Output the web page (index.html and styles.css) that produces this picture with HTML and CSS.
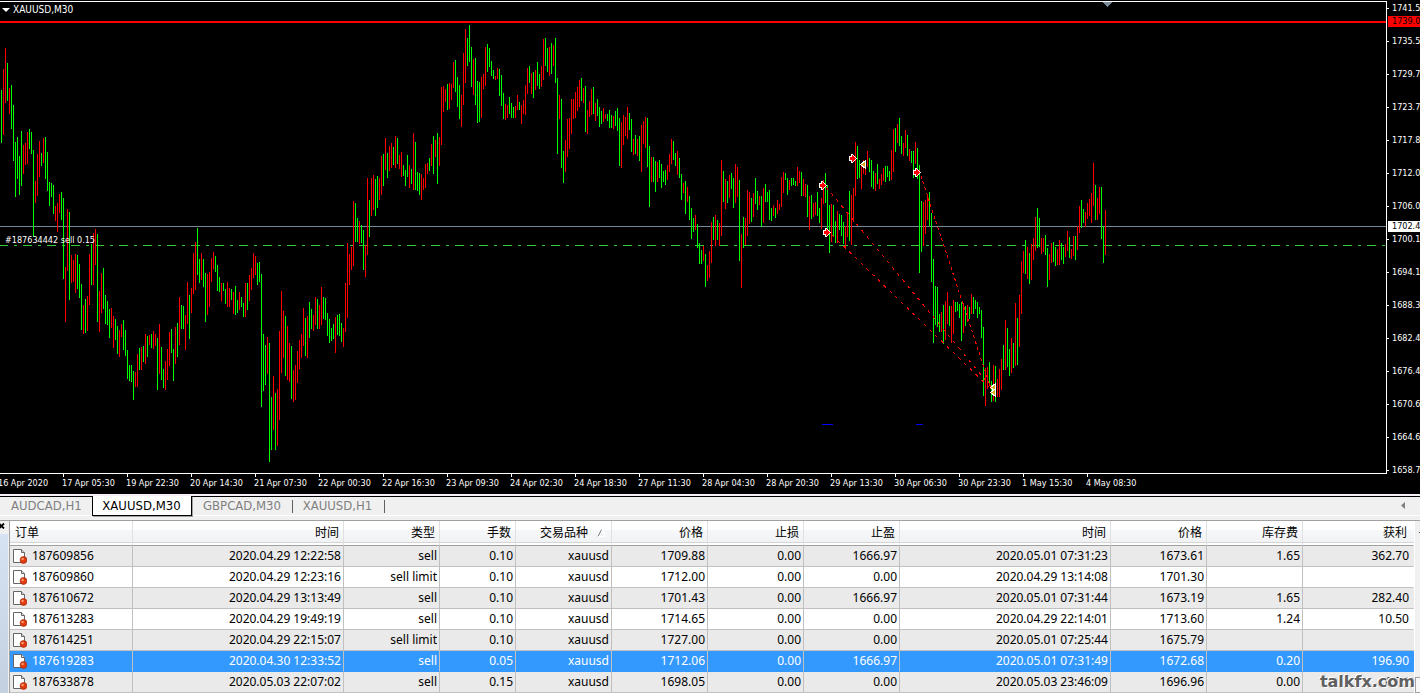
FILE: index.html
```html
<!DOCTYPE html>
<html lang="zh">
<head>
<meta charset="utf-8">
<title>XAUUSD,M30</title>
<link rel="stylesheet" href="styles.css">
</head>
<body>
<main class="app">
  <section class="chart">
    <div class="plot">
      <svg class="plot-svg" viewBox="0 2 1386 471" role="img" aria-label="XAUUSD,M30">
        <path class="price-line" d="M0 226.5H1386"/>
        <path class="order-line" d="M-1 245.5H1386"/>
        <path class="bars-down" id="bars-down"/>
        <path class="bars-up" id="bars-up"/>
        <path class="level-line" d="M0 22H1386"/>
        <path class="trade-line" d="M826 187L992 388M832 235L992 390"/>
        <path class="trade-line steep" d="M919 170L991 389"/>
        <path class="marker" d="M1103 2H1112L1107.500 7Z"/>
        <path class="zone" d="M822 424.500H833M916 424.500H923"/>
        <g class="entries">
          <g transform="translate(819 181)"><path class="arrow-edge" d="M0 2H2V0H4V1H5V2H6V3H7V4H8V5H7V6H6V7H5V8H4V9H2V7H0Z"/><path class="arrow-fill" d="M1 3H3V1H4V2H5V3H6V4H7V5H6V6H5V7H4V8H3V6H1Z"/></g>
          <g transform="translate(823 228)"><path class="arrow-edge" d="M0 2H2V0H4V1H5V2H6V3H7V4H8V5H7V6H6V7H5V8H4V9H2V7H0Z"/><path class="arrow-fill" d="M1 3H3V1H4V2H5V3H6V4H7V5H6V6H5V7H4V8H3V6H1Z"/></g>
          <g transform="translate(849 154)"><path class="arrow-edge" d="M0 2H2V0H4V1H5V2H6V3H7V4H8V5H7V6H6V7H5V8H4V9H2V7H0Z"/><path class="arrow-fill" d="M1 3H3V1H4V2H5V3H6V4H7V5H6V6H5V7H4V8H3V6H1Z"/></g>
          <g transform="translate(913 168)"><path class="arrow-edge" d="M0 2H2V0H4V1H5V2H6V3H7V4H8V5H7V6H6V7H5V8H4V9H2V7H0Z"/><path class="arrow-fill" d="M1 3H3V1H4V2H5V3H6V4H7V5H6V6H5V7H4V8H3V6H1Z"/></g>
        </g>
        <g class="exits">
          <path d="M865.500 160.500V168.500L860.500 164.500Z"/>
          <path d="M995.500 383.500V391.500L990.500 387.500Z"/>
          <path d="M995.500 388.500V396.500L990.500 392.500Z"/>
        </g>
      </svg>
      <button class="symbol" type="button"><span class="caret"></span>XAUUSD,M30</button>
      <span class="order-label">#187634442 sell 0.15</span>
    </div>
    <ul class="prices">
      <li>1741.5</li><li>1735.5</li><li>1729.7</li><li>1723.7</li><li>1717.8</li><li>1712.0</li><li>1706.0</li><li>1700.1</li><li>1694.1</li><li>1688.3</li><li>1682.4</li><li>1676.4</li><li>1670.6</li><li>1664.6</li><li>1658.7</li>
    </ul>
    <span class="tag tag-level">1739.0</span>
    <span class="tag tag-price">1702.4</span>
    <ul class="times">
      <li>16 Apr 2020</li><li>17 Apr 05:30</li><li>19 Apr 22:30</li><li>20 Apr 14:30</li><li>21 Apr 07:30</li><li>22 Apr 00:30</li><li>22 Apr 16:30</li><li>23 Apr 09:30</li><li>24 Apr 02:30</li><li>24 Apr 18:30</li><li>27 Apr 11:30</li><li>28 Apr 04:30</li><li>28 Apr 20:30</li><li>29 Apr 13:30</li><li>30 Apr 06:30</li><li>30 Apr 23:30</li><li>1 May 15:30</li><li>4 May 08:30</li>
    </ul>
  </section>
  <nav class="tabs">
    <button class="tab first" type="button">AUDCAD,H1</button>
    <button class="tab active" type="button">XAUUSD,M30</button>
    <button class="tab divided" type="button">GBPCAD,M30</button>
    <button class="tab divided" type="button">XAUUSD,H1</button>
    <button class="scroll-left" type="button" aria-label="Scroll left"><svg width="4" height="7" viewBox="0 0 4 7"><path d="M4 0V7L0 3.500Z" fill="#808080"/></svg></button>
  </nav>
  <section class="terminal">
    <div class="rail">
      <button class="close" type="button" aria-label="Close"><svg width="5" height="6" viewBox="0 0 5 6"><path d="M-1 .5L4 5.500M-1 5.500L4 .5" stroke="#000" stroke-width="1.800"/></svg></button>
      <div class="rail-fill"></div>
    </div>
    <table class="orders">
      <colgroup><col class="w-order"><col class="w-time"><col class="w-price"><col class="w-lots"><col class="w-price"><col class="w-price"><col class="w-price"><col class="w-price"><col class="w-time"><col class="w-price"><col class="w-price"><col class="w-profit"></colgroup>
      <thead>
        <tr><th>订单</th><th>时间</th><th>类型</th><th>手数</th><th>交易品种<svg class="sort" width="10" height="8" viewBox="0 0 10 8"><path d="M1 7.500L4.500 .5" stroke="#808080"/><path d="M5 .5L8.500 7.500H1" stroke="#fff" fill="none"/></svg></th><th>价格</th><th>止损</th><th>止盈</th><th>时间</th><th>价格</th><th>库存费</th><th>获利</th></tr>
      </thead>
      <tbody id="rows">
        <tr><td>187609856</td><td>2020.04.29 12:22:58</td><td>sell</td><td>0.10</td><td>xauusd</td><td>1709.88</td><td>0.00</td><td>1666.97</td><td>2020.05.01 07:31:23</td><td>1673.61</td><td>1.65</td><td>362.70</td></tr>
        <tr><td>187609860</td><td>2020.04.29 12:23:16</td><td>sell limit</td><td>0.10</td><td>xauusd</td><td>1712.00</td><td>0.00</td><td>0.00</td><td>2020.04.29 13:14:08</td><td>1701.30</td><td></td><td></td></tr>
        <tr><td>187610672</td><td>2020.04.29 13:13:49</td><td>sell</td><td>0.10</td><td>xauusd</td><td>1701.43</td><td>0.00</td><td>1666.97</td><td>2020.05.01 07:31:44</td><td>1673.19</td><td>1.65</td><td>282.40</td></tr>
        <tr><td>187613283</td><td>2020.04.29 19:49:19</td><td>sell</td><td>0.10</td><td>xauusd</td><td>1714.65</td><td>0.00</td><td>0.00</td><td>2020.04.29 22:14:01</td><td>1713.60</td><td>1.24</td><td>10.50</td></tr>
        <tr><td>187614251</td><td>2020.04.29 22:15:07</td><td>sell limit</td><td>0.10</td><td>xauusd</td><td>1727.00</td><td>0.00</td><td>0.00</td><td>2020.05.01 07:25:44</td><td>1675.79</td><td></td><td></td></tr>
        <tr class="selected"><td>187619283</td><td>2020.04.30 12:33:52</td><td>sell</td><td>0.05</td><td>xauusd</td><td>1712.06</td><td>0.00</td><td>1666.97</td><td>2020.05.01 07:31:49</td><td>1672.68</td><td>0.20</td><td>196.90</td></tr>
        <tr><td>187633878</td><td>2020.05.03 22:07:02</td><td>sell</td><td>0.15</td><td>xauusd</td><td>1698.05</td><td>0.00</td><td>0.00</td><td>2020.05.03 23:46:09</td><td>1696.96</td><td>0.00</td><td>16.35</td></tr>
      </tbody>
    </table>
    <div class="gutter"><span class="gutter-up"></span><span class="gutter-thumb"></span></div>
    <span class="watermark">talkfx.com</span>
  </section>
</main>
<script src="chart.js"></script>
</body>
</html>
```
FILE: styles.css
```css
* { box-sizing: border-box; }
body {
  margin: 0;
  background: #f0f0f0;
  font-family: "Noto Sans", "Noto Sans CJK SC", sans-serif;
  font-size: 12px;
  color: #000;
}
button {
  margin: 0;
  padding: 0;
  border: 0;
  background: none;
  color: inherit;
  font: inherit;
}
ul { margin: 0; padding: 0; list-style: none; }
.app { overflow: hidden; }

.chart {
  position: relative;
  display: grid;
  grid-template-columns: minmax(0, 1fr) 33px;
  padding-top: 1px;
  background: #000;
  color: #fff;
  font: 9px/12px "DejaVu Sans Condensed", "DejaVu Sans", sans-serif;
  overflow: hidden;
}
.plot {
  position: relative;
  border: 1px solid #fff;
  border-left: 0;
}
.plot-svg { display: block; width: 100%; height: auto; fill: none; shape-rendering: crispEdges; }
.price-line { stroke: #778899; }
.order-line { stroke: #32cd32; stroke-dasharray: 9 6 3 6; }
.level-line { stroke: #f00; stroke-width: 2; }
.bars-up { stroke: #f00; }
.bars-down { stroke: #0f0; }
.trade-line { stroke: #f00; stroke-dasharray: 3 5; }
.trade-line.steep { stroke-dasharray: 3 3; }
.marker { fill: #778899; }
.zone { stroke: #00f; }
.arrow-edge { fill: #fff; }
.arrow-fill { fill: #f00; }
.exits { fill: #daa520; stroke: #fff; }

.symbol {
  position: absolute;
  top: 1px;
  left: 2px;
  display: flex;
  align-items: center;
  gap: 3px;
  font-size: 10px;
  line-height: 14px;
}
.caret {
  border: 4px solid transparent;
  border-top-color: #fff;
  border-bottom-width: 0;
}
.order-label { position: absolute; top: 232px; left: 5px; }

.prices { height: 472px; }
.prices li {
  position: relative;
  height: 33px;
  padding: 1px 0 0 5px;
  white-space: nowrap;
}
.prices li::before {
  content: "";
  position: absolute;
  top: 7px;
  left: 0;
  width: 2px;
  height: 1px;
  background: #fff;
}
.tag {
  position: absolute;
  right: 0;
  width: 32px;
  height: 11px;
  padding-left: 4px;
  line-height: 11px;
  overflow: hidden;
}
.tag-level { top: 16px; background: #f00; color: #000; }
.tag-price { top: 221px; background: #fff; color: #000; }
.times {
  grid-column: 1 / -1;
  display: flex;
  height: 20px;
  margin-left: -2px;
}
.times li {
  position: relative;
  flex: 0 0 64px;
  padding-top: 3px;
  white-space: nowrap;
}
.times li::before {
  content: "";
  position: absolute;
  top: 0;
  left: 1px;
  width: 1px;
  height: 3px;
  background: #fff;
}

.tabs {
  display: flex;
  align-items: flex-start;
  height: 26px;
  border-top: 2px solid #f5eef5;
  box-shadow: inset 0 1px #000, inset 0 -4px #f0f0f0, inset 0 -5px #fff;
  background: #f0f0f0;
  color: #808080;
  font: 13px/16px "DejaVu Sans Condensed", "DejaVu Sans", sans-serif;
}
.tab { position: relative; padding: 2px 11px; white-space: nowrap; }
.tab.first { width: 92px; padding-right: 0; text-align: left; }
.tab.active {
  width: 100px;
  padding: 2px 1px 1px 0;
  border: 1px solid #000;
  border-top: 0;
  background: #fff;
  color: #000;
  box-shadow: 1px 1px #a0a0a0;
}
.tab.divided { width: 101px; padding-left: 0; padding-right: 1px; }
.tab.divided + .divided { width: 92px; padding-right: 3px; }
.tab.divided::after {
  content: "";
  position: absolute;
  top: 4px;
  right: 0;
  width: 1px;
  height: 13px;
  background: #606060;
}
.scroll-left { margin: 6px 15px 0 auto; line-height: 0; }

.terminal {
  position: relative;
  display: flex;
  border-top: 1px solid #a0a0a0;
}
.rail { display: flex; flex-direction: column; width: 9px; background: #f0f0f0; }
.close { display: flex; height: 13px; padding-top: 2px; }
.rail-fill { flex: 1; width: 8px; background: linear-gradient(#d6e3f2, #c2d0e0); }
.orders {
  flex: 1;
  min-width: 0;
  table-layout: fixed;
  border-collapse: separate;
  border-spacing: 0;
  border-left: 1px solid #a0a0a0;
  background: #fff;
}
.w-order { width: 123px; }
.w-time { width: 211px; }
.w-price { width: 96px; }
.w-lots { width: 76px; }
.w-profit { width: 111px; }
.orders th {
  height: 25px;
  padding: 0 4px 0 0;
  border-right: 1px solid #e0e0e0;
  border-bottom: 1px solid #a0a0a0;
  background: linear-gradient(#fff 0 9px, #f7f8fa 9px, #f1f2f4 21px, #d5d5d5 21px 22px, #fff 22px);
  font-weight: 400;
  line-height: 22px;
  text-align: right;
  white-space: nowrap;
}
.orders th:first-child { padding-left: 5px; text-align: left; }
.sort { margin-left: 9px; }
.orders td {
  height: 21px;
  padding: 0 2px 0 0;
  border-right: 1px solid #c0c0c0;
  border-bottom: 1px solid #c0c0c0;
  line-height: 20px;
  text-align: right;
  white-space: nowrap;
}
.orders tr > :last-child { padding-right: 4px; border-right-color: transparent; }
.orders th:last-child { padding-right: 6px; }
.orders td:first-child { text-align: left; }
.orders tbody tr:nth-child(odd) { background: #eaeaea; }
.orders tbody .selected { background: #39f; color: #fff; }
.orders .selected td { border-bottom-color: #39f; }
.doc { margin: 2px 5px 0 3px; vertical-align: top; }

.gutter {
  display: flex;
  flex-direction: column;
  justify-content: space-between;
  align-items: flex-end;
  width: 6px;
  padding-top: 11px;
  border-left: 1px solid #fff;
  background: #f0f0f0;
}
.gutter-up { width: 1px; height: 1px; background: #505050; }
.gutter-thumb { width: 5px; height: 16px; border: 1px solid #a0a0a0; border-right: 0; background: #f8f8f8; }
.watermark {
  position: absolute;
  right: 5px;
  bottom: 1px;
  color: #606060;
  font: bold 16px/20px "DejaVu Sans", sans-serif;
  text-shadow: 1px 1px #fff, -1px -1px #fff, 1px -1px #ddd, -1px 1px #ddd;
}
```
FILE: chart.js
```js
// High-low bars, one every 2px: direction (g = down, r = up), top, bottom.
const BARS = `
g90-143 r69-135 r48-103 g63-101 r88-114 g85-129 g105-161 g142-197 g137-179 g156-195
g131-186 r145-174 r143-165 r132-164 g129-149 g132-154 g150-237 r181-203 r154-196 r141-177
g153-166 r138-163 g137-179 g152-191 g182-206 g183-197 g185-214 r206-221 r203-232 r194-213
g192-220 g198-279 r267-322 r209-271 g212-300 r255-283 r260-282 r254-293 g255-289 g264-298
g284-330 r305-334 g299-333 r296-331 r254-305 g244-285 r233-285 r229-265 g234-322 r291-332
r273-313 g268-309 g295-324 g301-325 g309-338 r308-328 r316-348 g319-340 g326-354 r330-357
r324-337 g320-350 g330-356 g350-379 g365-381 g365-382 g371-400 r372-387 r354-387 g348-370
r347-370 g346-362 r334-364 g336-357 r335-345 g334-348 r331-349 r334-346 g338-390 r324-374
g347-380 g369-388 r361-390 r349-380 r332-366 g329-353 g349-381 r327-364 g323-357 r297-345
g305-329 g306-329 r315-350 r282-324 g295-339 r288-313 r253-294 r242-290 g228-275 g259-283
r253-280 g259-287 g273-322 r274-315 r272-307 r258-282 r252-269 g256-272 g265-291 g277-292
r283-301 g283-291 g289-304 r282-307 r288-307 g289-300 r292-314 g286-315 g300-313 r292-310
g297-307 g303-317 r283-317 g283-310 r275-301 r268-290 r253-278 r256-275 g263-285 g262-282
g274-407 g334-391 g345-385 r337-374 g343-462 g397-450 r376-430 g393-450 r389-446 r331-420
r291-373 r311-358 g316-376 r326-380 r343-382 g346-399 r370-402 r365-400 r351-383 r340-369
r334-358 r308-346 g318-356 r316-358 g302-338 g309-329 r315-331 r297-325 g299-329 r305-329
r287-325 g297-319 g298-320 g313-336 g319-343 g328-341 g324-339 r317-353 g315-335 g314-336
g323-342 r328-347 r283-332 r243-318 r254-285 r247-270 r201-266 g203-242 g218-242 r221-244
g225-243 g230-270 r245-277 r178-255 g200-237 r178-216 r175-210 g179-216 g176-208 r178-200
r156-195 g154-186 r138-170 g153-178 r146-171 r143-168 g147-165 r136-168 g138-164 r155-169
r152-177 g165-176 g170-186 g155-177 r165-188 g169-184 r133-190 g142-190 g172-191 g173-195
r174-200 r178-190 r164-188 r163-174 g158-171 r144-166 g136-174 r140-157 g133-184 r137-166
r87-145 r86-112 r89-102 g84-110 r83-109 r84-100 r62-88 g60-92 g77-107 g85-119
r95-127 r53-105 r29-83 g38-66 g25-62 g47-87 r59-95 g58-105 g81-123 g82-122
r77-118 r74-89 r47-86 g44-72 g48-67 g61-76 g70-79 r76-80 r68-79 g69-96
g75-106 g93-119 r104-120 r105-118 g97-114 g103-118 g107-118 r106-118 r95-110 g102-110
r105-124 r100-114 r85-115 r68-94 g66-83 r73-94 g72-98 r70-90 g62-86 g74-89
r66-87 r39-80 g38-66 g48-72 r47-76 g43-74 r45-66 g38-83 g78-154 r95-119
g99-168 g151-183 r140-172 r119-157 r118-149 r99-134 r99-119 r92-118 r87-111 r80-107
g78-101 r88-103 g86-132 r110-134 r101-117 r89-115 g87-114 r103-121 g99-116 g107-127
g111-124 r108-122 r114-119 g114-121 g110-128 g115-128 r116-129 g111-126 g108-131 g118-166
r122-168 r115-145 r117-136 r107-139 g113-130 g119-152 r139-155 g135-154 r139-156 g136-161
r125-172 r121-144 r117-148 g118-167 g146-207 r157-182 g157-182 g161-192 r162-182 g160-178
g164-188 g171-182 g170-185 r165-180 r154-172 r139-164 g141-160 g153-166 r151-175 g158-178
g174-200 r183-193 g181-214 r187-202 g196-220 g208-239 g218-232 r215-230 g224-248 g243-264
g250-264 r246-261 g254-287 r265-281 r251-278 r222-263 g217-240 r215-246 g220-240 r223-246
r160-236 g171-202 r179-209 g181-203 r175-198 g173-189 g178-208 r164-203 r167-197 g180-261
r234-288 g217-248 r218-245 r190-236 r192-224 g198-222 r193-217 g178-204 g191-210 r196-205
g196-227 r188-223 g184-202 g192-202 g190-220 g208-221 r205-216 g208-218 r200-214 r204-210
r177-207 r172-193 g173-180 g178-195 r180-190 g178-186 g178-185 g181-186 r167-186 r171-183
g172-196 r179-196 r184-197 g185-217 r196-230 g195-219 r203-217 r202-215 g192-216 g208-223
r198-229 r180-204 g173-203 g185-230 g205-253 r204-242 g205-236 g221-243 r211-243 g214-230
g215-236 g222-244 r226-249 r212-237 g191-241 r195-245 r188-222 r142-196 g146-179 g160-178
r163-189 r160-174 r165-175 r151-167 g158-172 g160-187 g171-189 r173-191 g164-184 r179-189
r174-185 r168-181 g166-182 g166-177 g171-181 r150-180 r129-172 g128-152 r124-143 g118-146
g136-154 r143-156 r130-148 g135-156 r149-161 g151-163 g151-178 r142-164 g148-179 g165-273
g201-252 r202-246 r200-234 r196-220 g192-226 g213-282 g259-343 g286-325 g287-327 g314-332
r312-332 g305-344 r301-340 r292-324 g306-326 r306-343 r300-334 g302-312 g302-311 g304-318
g302-341 r303-333 g306-326 r305-322 g307-319 r294-314 g297-314 g300-309 g302-318 g307-314
g310-338 g327-396 r368-406 r367-389 g362-384 g381-402 r365-401 g366-402 r379-397 r369-397
r359-390 g345-370 r320-370 g328-367 g349-376 r338-373 g343-368 r303-366 g318-365 r295-347
r261-314 r251-273 g240-274 r247-279 g253-284 r244-280 r238-260 r217-251 g208-248 g218-247
r238-254 r238-252 g235-255 g248-287 r254-280 r243-263 g242-262 g247-266 r249-265 r240-265
g243-260 g247-264 r244-257 r231-251 g237-258 r249-259 r236-256 g236-260 r226-250 r206-233
g200-228 g209-223 r212-227 r203-219 r199-216 r193-223 r163-206 g185-220 r198-220 r187-214
g187-239 g226-263 r210-255`.trim().split(/\s+/);

const paths = { g: "", r: "" };
BARS.forEach((bar, i) => {
  const [top, bottom] = bar.slice(1).split("-");
  paths[bar[0]] += `M${i * 2 + 1.5} ${top}V${bottom}`;
});
document.getElementById("bars-down").setAttribute("d", paths.g);
document.getElementById("bars-up").setAttribute("d", paths.r);

// Document icon in front of every order number.
const ICON = `<svg class="doc" width="14" height="16" viewBox="0 0 14 16">
<path d="M.5 1.500H8.500L11.500 4.500V14.500H.5Z" fill="#fff" stroke="#666"/>
<path d="M8.500 1.500V4.500H11.500" fill="#ddd" stroke="#666"/>
<circle cx="10.500" cy="12" r="3.400" fill="#e03c10" stroke="#a02808" stroke-width=".7"/>
<circle cx="9.600" cy="11" r="1.200" fill="#ff9a70"/></svg>`;
document.querySelectorAll("#rows td:first-child").forEach((cell) => {
  cell.insertAdjacentHTML("afterbegin", ICON);
});
```
